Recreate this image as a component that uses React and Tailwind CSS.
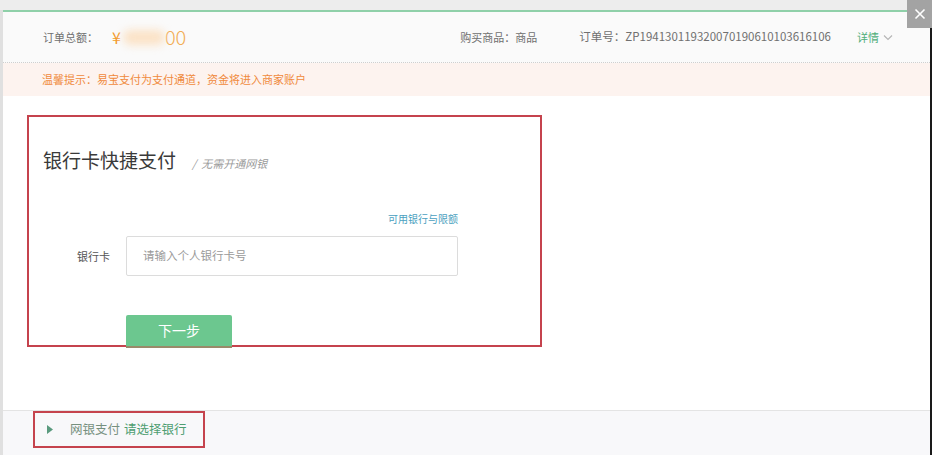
import React from 'react';

const font = { fontFamily: '"Noto Sans CJK SC", "Noto Sans", sans-serif' };

const App = () => {
    return (
        <div className="relative w-[932px] h-[455px] overflow-hidden bg-[#ededed] flex flex-col" style={font}>
            {/* close button */}
            <div className="absolute top-0 right-0 w-[25px] h-[28px] bg-[#a3a3a3] flex items-center justify-center z-20">
                <svg width="12" height="12" viewBox="0 0 12 12">
                    <path d="M1.5 1.5 L10.5 10.5 M10.5 1.5 L1.5 10.5" stroke="#fff" strokeWidth="1.6" />
                </svg>
            </div>

            {/* top strip */}
            <div className="h-[10px] shrink-0"></div>

            <div className="flex-1 flex flex-col border-l-[3px] border-r-[2px] border-l-[#e0e0e0] border-r-[#1a1a1a] bg-white">
                <div className="h-[2px] bg-[#8fd0a9] shrink-0"></div>

                {/* header */}
                <div className="h-[51px] shrink-0 flex items-center bg-[#fafafa] border-b border-dotted border-[#cfcfcf] pl-[40px] pr-[37px] text-[11px] text-[#707070]">
                    <span>订单总额：</span>
                    <span className="ml-[14px] flex items-center">
                        <span className="text-[16px] text-[#f39a2c]">¥</span>
                        <span className="ml-[2px] w-[42px] h-[15px] rounded-full bg-[#fbe2c6] blur-[4px]"></span>
                        <span className="ml-[0px] text-[20px] font-light leading-none text-[#f2ad55]">00</span>
                    </span>
                    <span className="ml-auto">购买商品：商品</span>
                    <span className="ml-[42px] text-[11.5px]">订单号：ZP194130119320070190610103616106</span>
                    <span className="ml-[26px] text-[#4fae79]">详情</span>
                    <svg className="ml-[4px]" width="10" height="7" viewBox="0 0 10 7">
                        <path d="M1 1.5 L5 5.5 L9 1.5" stroke="#b5b5b5" strokeWidth="1.1" fill="none" />
                    </svg>
                </div>

                {/* notice */}
                <div className="h-[33px] shrink-0 flex items-center bg-[#fdf3ef] pl-[39px] text-[11px] text-[#f08a3c]">
                    温馨提示：易宝支付为支付通道，资金将进入商家账户
                </div>

                {/* main */}
                <div className="flex-1 pt-[19px] pl-[24px] border-b border-[#e4e4e4]">
                    <div className="w-[515px] h-[232px] border-2 border-[#c5434d]">
                        <div className="pl-[14px] pt-[31px] flex items-baseline">
                            <span className="text-[19px] leading-[24px] text-[#3a3a3a]">银行卡快捷支付</span>
                            <span className="ml-[16px] text-[11px] italic text-[#9a9a9a]">/&nbsp; 无需开通网银</span>
                        </div>
                        <div className="mt-[40px] ml-[97px] w-[332px] text-right text-[10px] leading-[14px] text-[#4a9fc0]">
                            可用银行与限额
                        </div>
                        <div className="mt-[10px] flex items-center">
                            <span className="w-[97px] pr-[16px] text-right text-[11px] text-[#555]">银行卡</span>
                            <div className="w-[332px] h-[40px] border border-[#dcdcdc] rounded-[2px] bg-white flex items-center pl-[16px] text-[11.5px] text-[#9a9a9a]">
                                请输入个人银行卡号
                            </div>
                        </div>
                        <div className="mt-[39px] ml-[97px] w-[106px] h-[33px] bg-[#6cc78f] border-b-2 border-[#9a8a6a] rounded-t-[2px] flex items-center justify-center text-[14px] text-white relative">
                            下一步
                        </div>
                    </div>
                </div>

                {/* bottom */}
                <div className="h-[44px] shrink-0 bg-[#f8f8fa] pl-[30px]">
                    <div className="w-[172px] h-[37px] border-2 border-[#c5434d] flex items-center pl-[12px]">
                        <svg width="6" height="9" viewBox="0 0 6 9">
                            <path d="M0 0 L6 4.5 L0 9 Z" fill="#5a9a7e" />
                        </svg>
                        <span className="ml-[17px] text-[12.5px] text-[#76907f]">网银支付</span>
                        <span className="ml-[4px] text-[12.5px] text-[#4e9e71]">请选择银行</span>
                    </div>
                </div>
            </div>
        </div>
    );
};

export default App;
